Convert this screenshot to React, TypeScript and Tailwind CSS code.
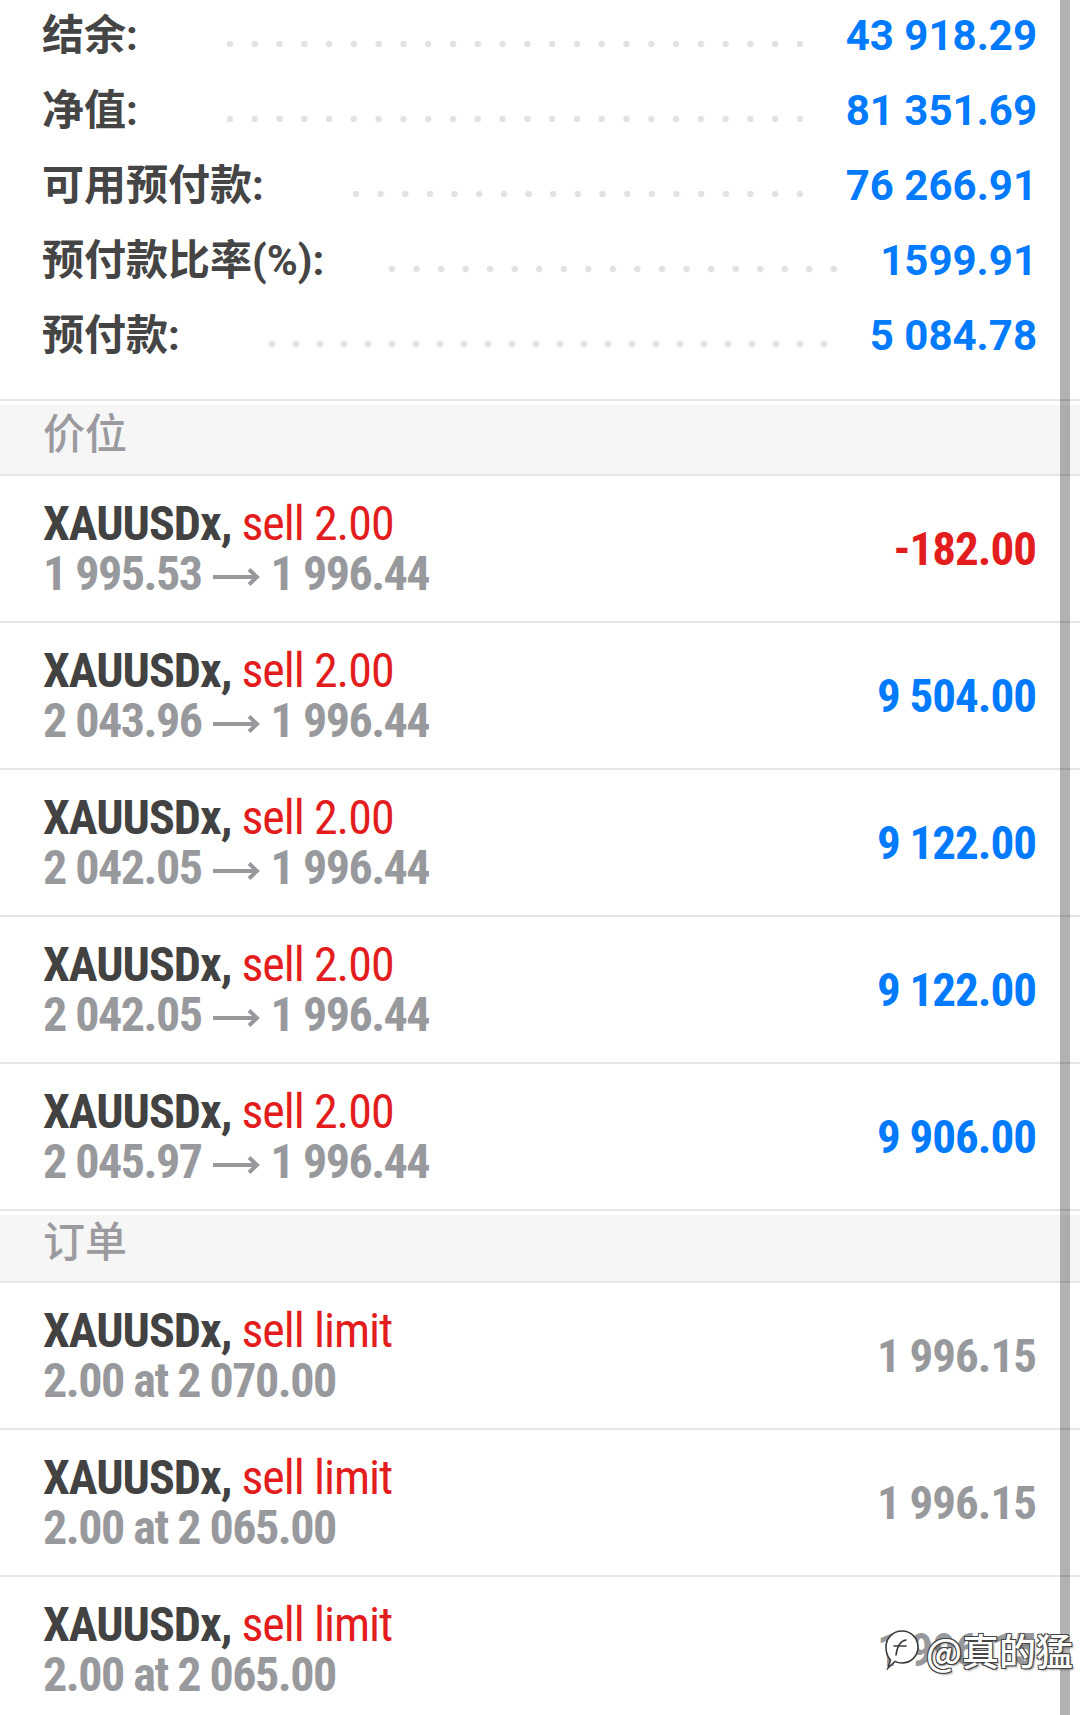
import React from 'react';

const accountRows = [
  { label: '结余:', value: '43 918.29', dots: 'ml-[80px] mr-[34px]' },
  { label: '净值:', value: '81 351.69', dots: 'ml-[80px] mr-[34px]' },
  { label: '可用预付款:', value: '76 266.91', dots: 'ml-[80px] mr-[34px]' },
  { label: '预付款比率(%):', value: '1599.91', dots: 'ml-[56px] mr-[34px]' },
  { label: '预付款:', value: '5 084.78', dots: 'ml-[80px] mr-[34px]' },
];

const positions = [
  { open: '1 995.53', profit: '-182.00', loss: true },
  { open: '2 043.96', profit: '9 504.00', loss: false },
  { open: '2 042.05', profit: '9 122.00', loss: false },
  { open: '2 042.05', profit: '9 122.00', loss: false },
  { open: '2 045.97', profit: '9 906.00', loss: false },
];

const orders = [
  { at: '2 070.00', price: '1 996.15' },
  { at: '2 065.00', price: '1 996.15' },
  { at: '2 065.00', price: '1 996.15' },
];

function AccountRow({ label, value, dots }: { label: string; value: string; dots: string }) {
  return (
    <div className="flex h-[75px] items-center">
      <span className="text-[42px] leading-none font-bold text-[#454545]">{label}</span>
      <span
        className={`mt-[16px] h-[12px] flex-1 bg-[radial-gradient(circle,#e2e2e2_3px,transparent_3.6px)] bg-[length:24px_12px] bg-repeat-space ${dots}`}
      />
      <span className="text-[42px] leading-none font-bold text-[#007aff]">{value}</span>
    </div>
  );
}

function SectionHeader({ title, height }: { title: string; height: string }) {
  return (
    <div className={`mt-[4px] flex items-center border-b-2 border-[#e5e5e5] bg-[#f6f6f6] pb-[10px] pl-[43px] ${height}`}>
      <span className="text-[42px] leading-none font-medium text-[#9b9b9f]">{title}</span>
    </div>
  );
}

function Arrow() {
  return (
    <svg width="47" height="20" viewBox="0 0 47 20" className="mx-[11px] inline-block align-middle" fill="none">
      <path d="M0 10h44M36 2.5l8 7.5-8 7.5" stroke="#98999d" strokeWidth="4" />
    </svg>
  );
}

function TradeRow({
  detail,
  value,
  valueColor,
}: {
  detail: React.ReactNode;
  value: string;
  valueColor: string;
}) {
  return (
    <div className="flex h-[147px] items-center justify-between border-b-2 border-[#e5e5e5] pr-[44px] pl-[43px] font-['Roboto_Condensed','Roboto',sans-serif] tracking-[-1px]">
      <div className="flex flex-col text-[48px] leading-[50px]">{detail}</div>
      <span className={`text-[47px] leading-none font-bold ${valueColor}`}>{value}</span>
    </div>
  );
}

function Watermark() {
  return (
    <div className="absolute top-[1628px] left-[882px] flex items-center gap-[4px]">
      <svg width="40" height="44" viewBox="0 0 40 44" fill="none">
        <path
          d="M20 3c9 0 16 7 16 16s-7 16-16 16c-3 0-5-.6-7-1.6L6 40l2.5-8C5.6 29 4 24.4 4 19 4 10 11 3 20 3z"
          fill="#fff"
          stroke="#3a3a3a"
          strokeWidth="1.6"
        />
        <path d="M14 27c1-7 3-14 10-15M12 18h12" stroke="#3a3a3a" strokeWidth="1.6" strokeLinecap="round" />
      </svg>
      <span className="font-['Noto_Sans_CJK_SC',sans-serif] text-[37px] leading-none font-medium text-white [text-shadow:1px_1px_0_#444,-1px_-1px_0_#444,1px_-1px_0_#444,-1px_1px_0_#444,2px_2px_2px_rgba(0,0,0,0.35)]">
        @真的猛
      </span>
    </div>
  );
}

export default function App() {
  return (
    <div className="relative h-[1715px] w-full overflow-hidden bg-white font-[Roboto,'Noto_Sans_CJK_SC',sans-serif]">
      {/* Account summary */}
      <div className="flex h-[401px] flex-col border-b-2 border-[#e5e5e5] pr-[43px] pl-[42px]">
        <div className="-mt-[2px]">
          {accountRows.map((row) => (
            <AccountRow key={row.label} {...row} />
          ))}
        </div>
      </div>

      <SectionHeader title="价位" height="h-[71px]" />
      {positions.map((p, i) => (
        <TradeRow
          key={i}
          valueColor={p.loss ? 'text-[#e31d1d]' : 'text-[#007aff]'}
          value={p.profit}
          detail={
            <>
              <span>
                <span className="font-bold text-[#424242]">XAUUSDx, </span>
                <span className="text-[#e31d1d]">sell 2.00</span>
              </span>
              <span className="font-bold tracking-[-1.5px] text-[#98999d]">
                {p.open}
                <Arrow />
                1 996.44
              </span>
            </>
          }
        />
      ))}

      <SectionHeader title="订单" height="h-[68px]" />
      {orders.map((o, i) => (
        <TradeRow
          key={i}
          valueColor="text-[#98999d]"
          value={o.price}
          detail={
            <>
              <span>
                <span className="font-bold text-[#424242]">XAUUSDx, </span>
                <span className="text-[#e31d1d]">sell limit</span>
              </span>
              <span className="font-bold tracking-[-1.5px] text-[#98999d]">2.00 at {o.at}</span>
            </>
          }
        />
      ))}

      {/* scrollbar overlay */}
      <div className="absolute top-0 bottom-0 left-[1060px] w-[10px] bg-black/30" />
      <Watermark />
    </div>
  );
}
